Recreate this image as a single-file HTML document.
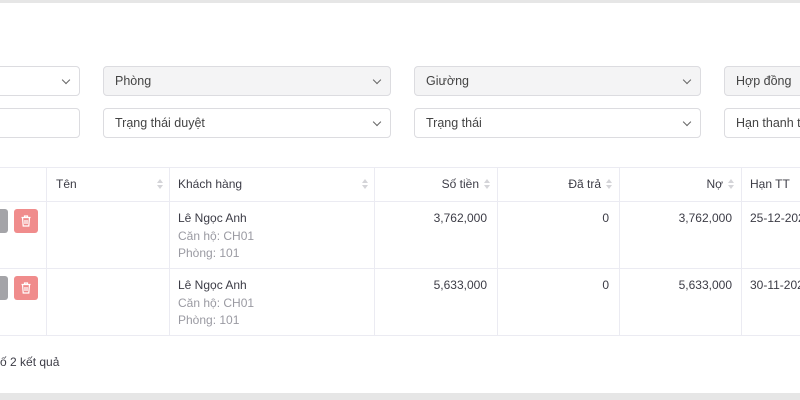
<!DOCTYPE html>
<html><head><meta charset="utf-8"><style>
*{box-sizing:border-box;margin:0;padding:0}
body{width:800px;height:400px;overflow:hidden;background:#fff;font-family:"Liberation Sans",sans-serif;font-size:12px;color:#3c3c46;position:relative}
.band{position:absolute;left:0;width:800px;background:#e6e6e6}
.f{position:absolute;height:30px;border:1px solid #dcdce0;border-radius:4px;padding:0 11px;line-height:28px;color:#444;font-size:12.5px;background:#fff;white-space:nowrap;overflow:hidden}
.f.g{background:#f4f4f5}
.chev{position:absolute;right:10px;top:10px;width:6px;height:6px;border-right:1.2px solid #666;border-bottom:1.2px solid #666;transform:rotate(45deg)}
.vl{position:absolute;top:167px;height:168px;width:1px;background:#ebebf2}
.hl{position:absolute;left:0;width:800px;height:1px;background:#ebebf2}
.t{position:absolute;white-space:nowrap}
.r{text-align:right}
.s{position:absolute;width:6px;height:10px}
.s:before,.s:after{content:"";position:absolute;left:0;border-left:3.5px solid transparent;border-right:3.5px solid transparent}
.s:before{top:0;border-bottom:4px solid #d4d4d8}
.s:after{top:6px;border-top:4px solid #d4d4d8}
.gr{color:#9a9aa2}
.btn{position:absolute;width:24px;height:24px;border-radius:3px}
.btn svg{position:absolute;left:7px;top:6px}
</style></head><body>
<div class="band" style="top:0;height:3px"></div>
<div class="band" style="top:393px;height:7px"></div>

<div class="f" style="left:-10px;top:66px;width:90px"><span class="chev"></span></div>
<div class="f g" style="left:103px;top:66px;width:288px">Phòng<span class="chev"></span></div>
<div class="f g" style="left:414px;top:66px;width:287px">Giường<span class="chev"></span></div>
<div class="f g" style="left:724px;top:66px;width:120px">Hợp đồng</div>
<div class="f" style="left:-10px;top:108px;width:90px"></div>
<div class="f" style="left:103px;top:108px;width:288px">Trạng thái duyệt<span class="chev"></span></div>
<div class="f" style="left:414px;top:108px;width:287px">Trạng thái<span class="chev"></span></div>
<div class="f" style="left:724px;top:108px;width:120px">Hạn thanh toán</div>

<div class="hl" style="top:167px"></div>
<div class="hl" style="top:201px"></div>
<div class="hl" style="top:268px"></div>
<div class="hl" style="top:335px"></div>
<div class="vl" style="left:46px"></div>
<div class="vl" style="left:169px"></div>
<div class="vl" style="left:374px"></div>
<div class="vl" style="left:497px"></div>
<div class="vl" style="left:619px"></div>
<div class="vl" style="left:741px"></div>

<div class="t" style="left:56px;top:177px">Tên</div><div class="s" style="left:157px;top:179px"></div>
<div class="t" style="left:178px;top:177px">Khách hàng</div><div class="s" style="left:362px;top:179px"></div>
<div class="t r" style="right:321px;top:177px">Số tiền</div><div class="s" style="left:484px;top:179px"></div>
<div class="t r" style="right:199px;top:177px">Đã trả</div><div class="s" style="left:606px;top:179px"></div>
<div class="t r" style="right:77px;top:177px">Nợ</div><div class="s" style="left:728px;top:179px"></div>
<div class="t" style="left:750px;top:177px">Hạn TT</div>

<div class="btn" style="left:-16px;top:209px;background:#a4a4a8"></div>
<div class="btn" style="left:14px;top:209px;background:#f08c8c"><svg width="10" height="12" viewBox="0 0 10 12" fill="none" stroke="#fff" stroke-width="1.2"><path d="M0.5 2.5h9M3.5 2.5V1h3v1.5M1.5 2.5l.7 8.5h5.6l.7-8.5M4 5v4M6 5v4"/></svg></div>
<div class="t" style="left:178px;top:211px">Lê Ngọc Anh</div>
<div class="t gr" style="left:178px;top:229px">Căn hộ: CH01</div>
<div class="t gr" style="left:178px;top:246px">Phòng: 101</div>
<div class="t r" style="right:313px;top:211px">3,762,000</div>
<div class="t r" style="right:191px;top:211px">0</div>
<div class="t r" style="right:68px;top:211px">3,762,000</div>
<div class="t" style="left:750px;top:211px">25-12-2024</div>

<div class="btn" style="left:-16px;top:276px;background:#a4a4a8"></div>
<div class="btn" style="left:14px;top:276px;background:#f08c8c"><svg width="10" height="12" viewBox="0 0 10 12" fill="none" stroke="#fff" stroke-width="1.2"><path d="M0.5 2.5h9M3.5 2.5V1h3v1.5M1.5 2.5l.7 8.5h5.6l.7-8.5M4 5v4M6 5v4"/></svg></div>
<div class="t" style="left:178px;top:278px">Lê Ngọc Anh</div>
<div class="t gr" style="left:178px;top:296px">Căn hộ: CH01</div>
<div class="t gr" style="left:178px;top:313px">Phòng: 101</div>
<div class="t r" style="right:313px;top:278px">5,633,000</div>
<div class="t r" style="right:191px;top:278px">0</div>
<div class="t r" style="right:68px;top:278px">5,633,000</div>
<div class="t" style="left:750px;top:278px">30-11-2024</div>

<div class="t" style="left:-6px;top:355px">số 2 kết quả</div>
</body></html>
